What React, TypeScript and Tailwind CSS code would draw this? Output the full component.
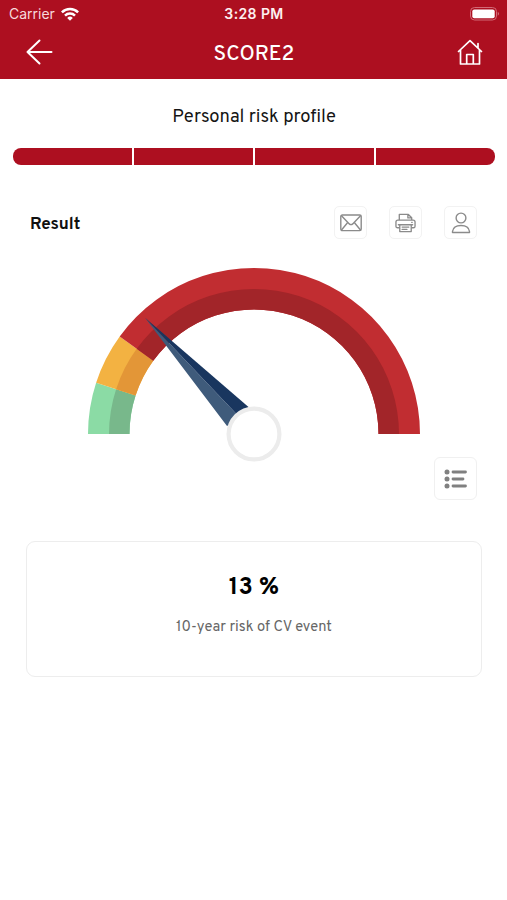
import type { ReactNode } from "react";

const CX = 170;
const CY = 170;

function point(radius: number, degrees: number) {
  const a = (degrees * Math.PI) / 180;
  return `${(CX - radius * Math.cos(a)).toFixed(2)} ${(CY - radius * Math.sin(a)).toFixed(2)}`;
}

function band(inner: number, outer: number, from: number, to: number) {
  return `M${point(outer, from)}A${outer} ${outer} 0 0 1 ${point(outer, to)}L${point(inner, to)}A${inner} ${inner} 0 0 0 ${point(inner, from)}Z`;
}

const zones = [
  { from: 0, to: 18, light: "#8bdba5", dark: "#78b88b" },
  { from: 18, to: 36, light: "#f3b242", dark: "#e39637" },
  { from: 36, to: 180, light: "#c12d31", dark: "#a22529" },
];

function Gauge() {
  return (
    <svg width="340" height="200" viewBox="0 0 340 200" className="block">
      {zones.map((z) => (
        <g key={z.from}>
          <path d={band(124.5, 166, z.from, z.to)} fill={z.light} />
          <path d={band(124.5, 145, z.from, z.to)} fill={z.dark} />
        </g>
      ))}
      <path d="M61 53.7 143 162l15-8-6-4.500Z" fill="#3f5b7b" />
      <path d="M61 53.7 152 149.500l7 6 5.500-12.500Z" fill="#19365f" />
      <circle cx="170" cy="170" r="25.400" fill="#fff" stroke="#ececec" strokeWidth="4.200" />
    </svg>
  );
}

function StatusBar() {
  return (
    <div className="grid h-[27px] grid-cols-3 items-center pl-[9px] pr-[7px] leading-none">
      <div className="flex items-center gap-[6px]">
        <span className="font-['Inter',sans-serif] text-[14px] text-[#f7d9dc]">Carrier</span>
        <svg width="18" height="14" viewBox="0 0 18 14" fill="none" stroke="#fff" strokeWidth="2.500">
          <path d="M.9 5.300a11.500 11.500 0 0 1 16.200 0" />
          <path d="M4 8.600a7.100 7.100 0 0 1 10 0" />
          <path d="M9 13.700 6.200 10.900a4 4 0 0 1 5.600 0Z" fill="#fff" stroke="none" />
        </svg>
      </div>
      <span className="pr-px pt-px text-center font-['Inter',sans-serif] text-[14px] font-semibold tracking-[0.4px] text-[#fdf0f0]">3:28 PM</span>
      <svg width="31" height="14" viewBox="0 0 31 14" className="justify-self-end">
        <rect x="1.500" y=".5" width="26" height="12.500" rx="4" fill="none" stroke="#d26a76" />
        <rect x="3.300" y="2.400" width="22.400" height="8.800" rx="2" fill="#fff" />
        <path d="M28.800 4.800q2 2 0 4Z" fill="#d98a93" />
      </svg>
    </div>
  );
}

function Tile({ children }: { children: ReactNode }) {
  return (
    <button className="flex size-[33px] items-center justify-center rounded-[5px] border-[1.5px] border-[#f2f2f2] bg-white">
      {children}
    </button>
  );
}

const icon = { fill: "none", stroke: "#8b8b8b", strokeWidth: 1.4, strokeLinejoin: "round" as const, strokeLinecap: "round" as const, className: "shrink-0" };

export default function App() {
  return (
    <div className="flex h-[900px] w-[507px] flex-col overflow-hidden bg-white font-['Overpass','Roboto',sans-serif] text-[#151515]">
      <header className="h-[79px] shrink-0 bg-[#ad0f20]">
        <StatusBar />
        <div className="flex h-[50px] items-center justify-between pl-[26px] pr-[24px] text-white">
          <svg width="28" height="26" viewBox="0 0 28 26" fill="none" stroke="#fff" strokeWidth="2" strokeLinecap="round" strokeLinejoin="round">
            <path d="M13.500 1.500 1.500 13l12 11.500M1.500 13h24" />
          </svg>
          <h1 className="pr-[3px] pt-[6px] text-[21px] font-medium leading-[26px]">SCORE2</h1>
          <svg width="26" height="27" viewBox="0 0 26 27" fill="none" stroke="#fff" strokeWidth="1.700" strokeLinejoin="round" strokeLinecap="round">
            <path d="M1.500 12.500 13 1.700l11.500 10.800M3.500 11v14h19V11M9.700 25v-9.500h6.600V25M21 9V4.500" />
          </svg>
        </div>
      </header>

      <h2 className="mt-[27px] pl-px text-center text-[18.4px] leading-[24px]">Personal risk profile</h2>
      <div className="ml-[13px] mr-[12px] mt-[18px] flex h-[17px] shrink-0 gap-[2px] overflow-hidden rounded-[8px]">
        <div className="flex-1 bg-[#ad0f20]" />
        <div className="flex-1 bg-[#ad0f20]" />
        <div className="flex-1 bg-[#ad0f20]" />
        <div className="flex-1 bg-[#ad0f20]" />
      </div>

      <div className="mt-[41px] flex h-[33px] shrink-0 items-center justify-between pl-[30px] pr-[30px]">
        <h3 className="pt-[6px] text-[17px] font-bold text-[#101010]">Result</h3>
        <div className="flex gap-[22px]">
          <Tile>
            <svg width="22" height="18" viewBox="0 0 22 18" {...icon}>
              <rect x=".8" y="1" width="20.400" height="15.600" rx="1.500" />
              <path d="m1.500 1.700 7.800 8.200q1.700 1.400 3.400 0l7.800-8.200M1.500 16l6.200-7.500M20.500 16l-6.200-7.500" />
            </svg>
          </Tile>
          <Tile>
            <svg width="21" height="20" viewBox="0 0 22 20" {...icon}>
              <path d="M4.500 7V1h9.500l3.500 3.500V7M13.500 1v3.700h4M4.500 15H2.700Q1 15 1 13.300V9q0-2 2-2h16q2 0 2 2v4.300q0 1.700-1.700 1.700h-1.800" />
              <path d="M3.500 11.800h15M5 11.800V19h12v-7.200M7.500 14.300h7M7.500 16.700h5" />
              <path d="M17.500 9.300h.5" />
            </svg>
          </Tile>
          <Tile>
            <svg width="20" height="22" viewBox="0 0 20 22" {...icon}>
              <circle cx="10" cy="6" r="4.900" />
              <path d="M1.500 20.500v-1q.8-6 8.500-6t8.500 6v1Z" />
            </svg>
          </Tile>
        </div>
      </div>

      <div className="mt-[25px] flex h-[193px] shrink-0 justify-center pl-[1px]">
        <Gauge />
      </div>

      <button className="mr-[30px] flex size-[43px] shrink-0 items-center justify-center self-end rounded-[6px] border-[1.5px] border-[#f0f0f0] bg-white">
        <svg width="24" height="20" viewBox="0 0 24 20" fill="#808080" stroke="#808080" strokeWidth="2.800" strokeLinecap="round">
          <path d="M9 3h12.500M9 10h10M9 17h12.500" />
          <g stroke="none">
            <circle cx="3" cy="3" r="2.500" />
            <circle cx="3" cy="10" r="2.500" />
            <circle cx="3" cy="17" r="2.500" />
          </g>
        </svg>
      </button>

      <section className="ml-[26px] mr-[25px] mt-[41px] flex h-[136px] shrink-0 flex-col items-center rounded-[9px] border-[1.5px] border-[#ededed] pt-[30px]">
        <p className="text-[24px] font-bold leading-[32px] text-black">13 %</p>
        <p className="mt-[14px] text-[14.7px] leading-[20px] text-[#666]">10-year risk of CV event</p>
      </section>
    </div>
  );
}
